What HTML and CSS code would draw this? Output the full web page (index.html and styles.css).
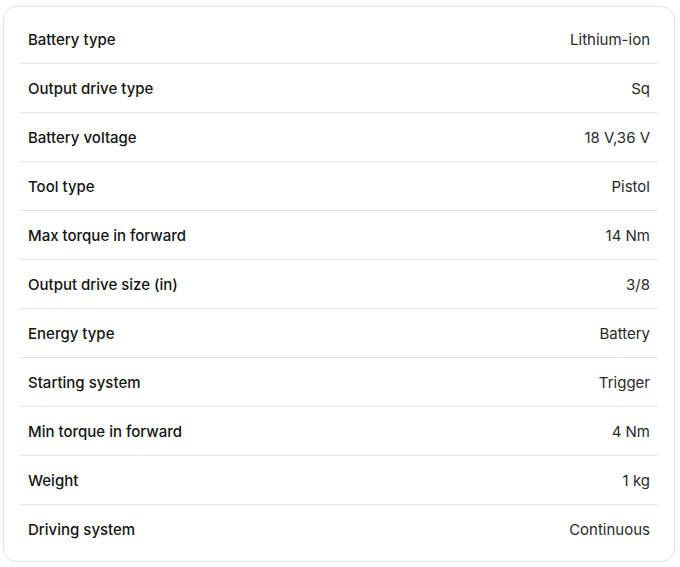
FILE: index.html
```html
<!DOCTYPE html>
<html>
<head>
<meta charset="utf-8">
<link rel="stylesheet" href="styles.css">
</head>
<body>
<div class="card">
  <div class="row"><span class="label">Battery type</span><span class="value">Lithium-ion</span></div>
  <div class="row"><span class="label">Output drive type</span><span class="value">Sq</span></div>
  <div class="row"><span class="label">Battery voltage</span><span class="value">18 V,36 V</span></div>
  <div class="row"><span class="label">Tool type</span><span class="value">Pistol</span></div>
  <div class="row"><span class="label">Max torque in forward</span><span class="value">14 Nm</span></div>
  <div class="row"><span class="label">Output drive size (in)</span><span class="value">3/8</span></div>
  <div class="row"><span class="label">Energy type</span><span class="value">Battery</span></div>
  <div class="row"><span class="label">Starting system</span><span class="value">Trigger</span></div>
  <div class="row"><span class="label">Min torque in forward</span><span class="value">4 Nm</span></div>
  <div class="row"><span class="label">Weight</span><span class="value">1 kg</span></div>
  <div class="row last"><span class="label">Driving system</span><span class="value">Continuous</span></div>
</div>
</body>
</html>
```
FILE: styles.css
```css
html, body {
  margin: 0;
  padding: 0;
  background: #ffffff;
}
body {
  font-family: Inter, "Noto Sans", sans-serif;
  padding: 6px 0 0 3px;
}
.card {
  width: 672px;
  box-sizing: border-box;
  border: 1px solid #e2e2e2;
  border-radius: 14px;
  padding: 8px 16px 7px 16px;
}
.row {
  display: flex;
  justify-content: space-between;
  align-items: center;
  height: 49px;
  box-sizing: border-box;
  padding: 0 8px 0 8px;
  border-bottom: 1px solid #e5e5e5;
}
.row.last {
  border-bottom: none;
}
.label {
  font-size: 15px;
  font-weight: 500;
  color: #141414;
}
.value {
  font-size: 15px;
  font-weight: 400;
  color: #2a2a2a;
}
```
